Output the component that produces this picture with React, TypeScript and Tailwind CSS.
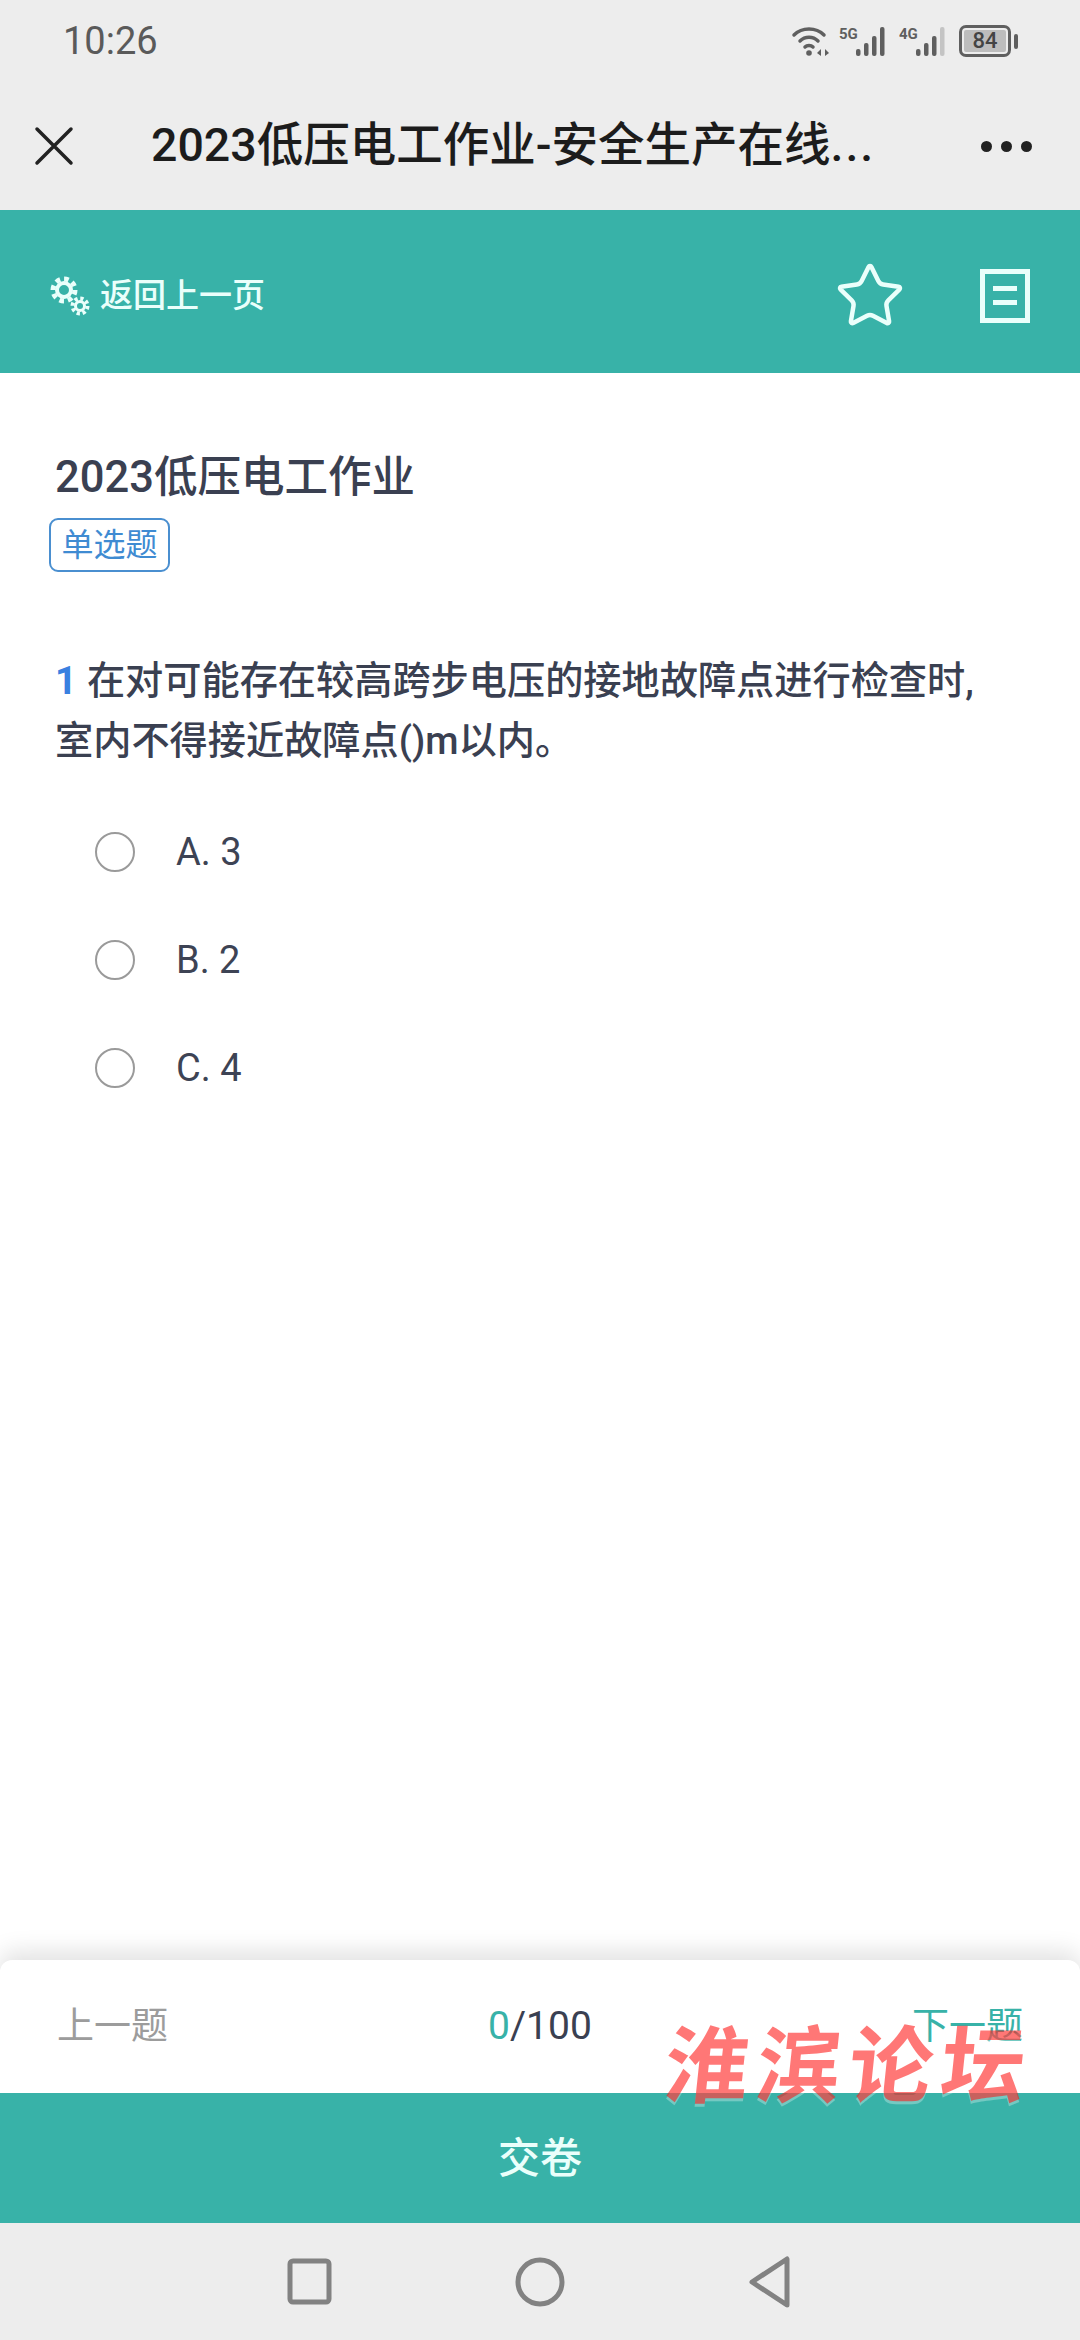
import { Star } from "lucide-react"

const sans = "font-['Roboto','Noto_Sans_CJK_SC',sans-serif]"

function Bars({ label, dim }: { label: string; dim?: boolean }) {
    return (
        <svg width="52" height="32" viewBox="0 0 52 32" fill="#5f5f5f">
            <text x="0" y="14" fontSize="15" fontWeight="700" fontFamily="Roboto, sans-serif">{label}</text>
            <rect x="17" y="24" width="4.5" height="7" rx="2" />
            <rect x="25" y="18" width="4.5" height="13" rx="2" />
            <rect x="33" y="11" width="4.5" height="20" rx="2" />
            <rect x="41" y="2" width="4.5" height="29" rx="2" fill={dim ? "#c4c4c4" : "#5f5f5f"} />
        </svg>
    )
}

function StatusIcons() {
    return (
        <div className="flex items-center gap-[8px]">
            <svg width="40" height="32" viewBox="0 0 40 32" fill="none" stroke="#5f5f5f" strokeLinecap="round">
                <path d="M3 10 C 11 2, 25 2, 33 10" strokeWidth="3.5" />
                <path d="M9 16 C 14 11, 22 11, 27 16" strokeWidth="3.5" />
                <path d="M14 22 C 16 20, 20 20, 22 22" strokeWidth="3.5" />
                <circle cx="18" cy="28" r="2.8" fill="#5f5f5f" stroke="none" />
                <path d="M30 24 L26 28 L30 31 Z M34 24 L38 28 L34 31 Z" fill="#5f5f5f" stroke="none" />
            </svg>
            <Bars label="5G" />
            <Bars label="4G" dim />
            <div className="flex items-center gap-[3px]">
                <div className="flex h-[32px] w-[52px] items-center justify-center rounded-[7px] border-[3px] border-[#5f5f5f] p-[2px]">
                    <div className="flex h-full w-full items-center justify-center rounded-[2px] bg-[#bdbdbd] text-[22px] leading-none font-medium text-[#444]">
                        84
                    </div>
                </div>
                <div className="h-[15px] w-[4px] rounded-full bg-[#5f5f5f]" />
            </div>
        </div>
    )
}

function Gears() {
    return (
        <svg width="44" height="44" viewBox="0 0 44 44" fill="none" stroke="#eafffb">
            <circle cx="16" cy="16" r="7" strokeWidth="4" />
            <circle cx="16" cy="16" r="11" strokeWidth="5" strokeDasharray="4.6 4" />
            <circle cx="32" cy="32" r="4.5" strokeWidth="3" />
            <circle cx="32" cy="32" r="7.5" strokeWidth="4" strokeDasharray="3.2 2.7" />
        </svg>
    )
}

function Option({ text }: { text: string }) {
    return (
        <div className="flex h-[108px] items-center pl-[95px]">
            <div className="h-[40px] w-[40px] rounded-full border-2 border-[#9a9a9a]" />
            <span className="ml-[41px] text-[38px] text-[#3d4354]">{text}</span>
        </div>
    )
}

export default function App() {
    return (
        <div className={`relative flex h-[2340px] w-[1080px] flex-col overflow-hidden bg-white ${sans}`}>
            <div className="h-[210px] shrink-0 bg-[#ededed]">
                <div className="flex h-[82px] items-center justify-between pr-[62px] pl-[63px]">
                    <span className="text-[38px] text-[#5a5a5a]">10:26</span>
                    <StatusIcons />
                </div>
                <div className="flex h-[128px] items-center">
                    <svg className="ml-[34px] shrink-0" width="40" height="40" viewBox="0 0 40 40" stroke="#222" strokeWidth="3.5" strokeLinecap="round">
                        <path d="M3 3 L37 37 M37 3 L3 37" />
                    </svg>
                    <div className="ml-[77px] w-[722px] text-[46.5px] font-medium whitespace-nowrap text-[#1c1c1c]">
                        2023低压电工作业-安全生产在线<span className="tracking-[2px]">...</span>
                    </div>
                    <div className="ml-[108px] flex gap-[9px]">
                        <div className="h-[11px] w-[11px] rounded-full bg-[#222]" />
                        <div className="h-[11px] w-[11px] rounded-full bg-[#222]" />
                        <div className="h-[11px] w-[11px] rounded-full bg-[#222]" />
                    </div>
                </div>
            </div>

            <div className="flex h-[163px] shrink-0 items-center bg-[#38b2a8] pt-[8px] pr-[50px] pl-[48px]">
                <Gears />
                <span className="ml-[8px] text-[33px] font-medium text-[#eafffb]">返回上一页</span>
                <Star className="mr-[74px] ml-auto" size={72} color="#eafffb" strokeWidth={1.5} />
                <div className="flex h-[54px] w-[50px] flex-col items-center justify-center gap-[9px] border-[5px] border-[#eafffb]">
                    <div className="h-[5px] w-[24px] bg-[#eafffb]" />
                    <div className="h-[5px] w-[24px] bg-[#eafffb]" />
                </div>
            </div>

            <main className="min-h-0 flex-1 pt-[77px]">
                <div className="pl-[55px] text-[43.5px] leading-[56px] font-medium text-[#3a4051]">2023低压电工作业</div>
                <div className="mt-[12px] ml-[49px] flex h-[54px] w-[121px] items-center justify-center rounded-[9px] border-2 border-[#4a8fd0] text-[32px] text-[#3f8bd2]">
                    单选题
                </div>
                <div className="mt-[79px] px-[55px] text-[38.2px] leading-[60px] font-medium text-[#3a4051]">
                    <span className="mr-[10px] font-bold text-[#3a80e0]">1</span>在对可能存在较高跨步电压的接地故障点进行检查时,
                    <br />
                    室内不得接近故障点()m以内。
                </div>
                <div className="mt-[27px]">
                    <Option text="A. 3" />
                    <Option text="B. 2" />
                    <Option text="C. 4" />
                </div>
            </main>

            <div className="flex h-[133px] shrink-0 items-center justify-between rounded-t-[12px] bg-white px-[57px] shadow-[0_-8px_24px_rgba(0,0,0,0.12)]">
                <span className="w-[150px] text-[37px] text-[#9c9c9c]">上一题</span>
                <span className="text-[39px] text-[#3a4051]"><span className="text-[#38b2a8]">0</span>/100</span>
                <span className="w-[150px] text-right text-[37px] text-[#38b2a8]">下一题</span>
            </div>
            <div className="flex h-[130px] shrink-0 items-center justify-center bg-[#38b2a8] text-[42px] font-medium text-[#eafffb]">
                交卷
            </div>

            <div className="flex h-[117px] shrink-0 items-center justify-center bg-[#ededed]">
                <svg width="520" height="60" viewBox="0 0 520 60" fill="none" stroke="#828282" strokeWidth="5" strokeLinejoin="round">
                    <rect x="10" y="9" width="39" height="41" rx="3" />
                    <circle cx="260" cy="30" r="22" />
                    <path d="M507 7 L507 53 L472 30 Z" />
                </svg>
            </div>

            <div className="absolute top-[2012px] left-[665px] w-[360px] -skew-x-6 text-[84px] leading-[112px] font-bold tracking-[8px] whitespace-nowrap text-[rgba(255,29,26,0.6)] [text-shadow:0_3px_0_rgba(255,255,255,0.3)]">
                淮滨论坛
            </div>
        </div>
    )
}
